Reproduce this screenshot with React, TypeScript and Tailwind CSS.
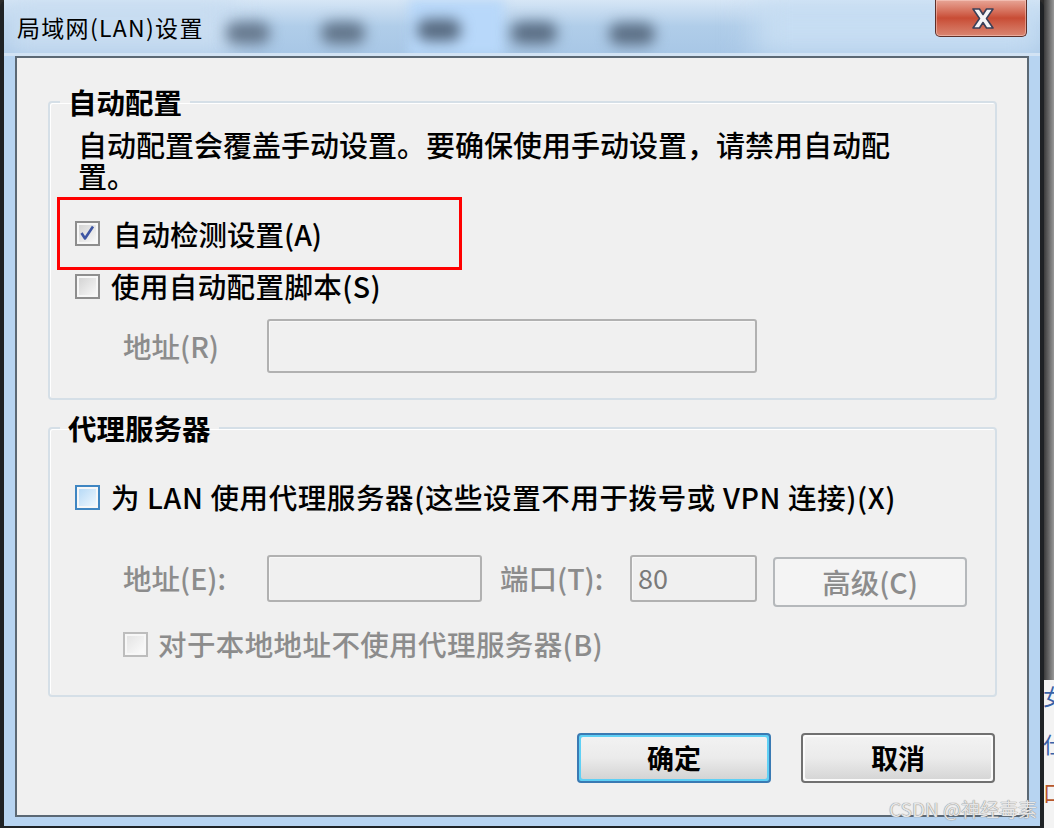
import React from 'react';

const FONT = "font-['Noto_Sans_CJK_SC','Noto_Sans',sans-serif]";

type Kind = 'checked' | 'plain' | 'hot' | 'disabled';

function Check({ kind }: { kind: Kind }) {
  const border =
    kind === 'hot' ? 'border-[#3f86c2]' : kind === 'disabled' ? 'border-[#bdbdbd]' : 'border-[#8e8e8e]';
  const fill =
    kind === 'hot'
      ? 'from-[#b7daf6] to-[#eef7fe]'
      : kind === 'disabled'
      ? 'from-[#e4e4e4] to-[#fbfbfb]'
      : 'from-[#d4d4d4] to-[#f8f8f8]';
  return (
    <div className={`relative w-[25px] h-[25px] shrink-0 border-[2.5px] ${border} bg-[#f7f7f7] p-[2px]`}>
      <div className={`w-full h-full bg-linear-to-br ${fill}`} />
      {kind === 'checked' && (
        <svg className="absolute inset-0" width="20" height="20" viewBox="0 0 20 20">
          <path d="M4.5 10 L8 15.5 L16 3.5" fill="none" stroke="#3d55a3" strokeWidth="2.6" strokeLinejoin="round" />
        </svg>
      )}
    </div>
  );
}

function TextBox({ w, h, children }: { w: string; h: string; children?: React.ReactNode }) {
  return (
    <div
      className={`${w} ${h} shrink-0 rounded-[3px] border-2 border-[#b1b1b1] bg-[#f0f0f0] shadow-[inset_1px_1px_0_#f7f7f7] px-[6px] pt-[3px] text-[27px] leading-[36px] text-[#7a7a7a]`}
    >
      {children}
    </div>
  );
}

function Legend({ children }: { children: React.ReactNode }) {
  return <legend className="ml-[10px] px-[8px] text-[28.5px] leading-[30px] font-bold text-black">{children}</legend>;
}

export default function App() {
  return (
    <div className={`w-[1054px] h-[828px] flex bg-[#2b2b2b] overflow-hidden relative ${FONT}`}>
      {/* window */}
      <div className="w-[1044px] h-[828px] flex flex-col bg-[#b7d4f1] border-l-4 border-r-4 border-b-2 border-[#1f2225] rounded-tl-[8px] rounded-tr-[8px]">
        {/* title bar */}
        <div className="relative h-[56px] shrink-0 overflow-hidden bg-linear-to-b from-[#d6e6f6] via-[#b0cde9] to-[#a8c7e6] border-b-[3px] border-[#d2e3f4]">
          <div className="absolute left-[0px] top-0 w-[230px] h-[56px] bg-[#c9ddf1] blur-[14px]" />
          <div className="absolute left-[405px] top-0 w-[95px] h-[56px] bg-[#b8d8fa] blur-[6px]" />
          <div className="absolute left-[222px] top-[22px] w-[44px] h-[22px] rounded-[10px] bg-[#66788d] blur-[7px]" />
          <div className="absolute left-[317px] top-[22px] w-[44px] h-[22px] rounded-[10px] bg-[#617489] blur-[7px]" />
          <div className="absolute left-[413px] top-[19px] w-[44px] h-[22px] rounded-[10px] bg-[#56697f] blur-[7px]" />
          <div className="absolute left-[507px] top-[22px] w-[46px] h-[22px] rounded-[10px] bg-[#5a6d83] blur-[7px]" />
          <div className="absolute left-[605px] top-[23px] w-[46px] h-[22px] rounded-[10px] bg-[#5b6e84] blur-[7px]" />
          <div className="absolute left-[750px] top-0 w-[290px] h-[56px] bg-[#c8def3] blur-[16px]" />
          <div className="relative pl-[13px] pt-[13px] text-[23px] leading-[28px] text-black tracking-[1.3px]">
            局域网(LAN)设置
          </div>
          {/* close button */}
          <div className="absolute top-0 right-[13px] w-[92px] h-[37px] rounded-b-[5px] border border-t-0 border-[#5d2f29] bg-linear-to-b from-[#e7a597] via-[#c84c35] to-[#d98571] flex items-center justify-center shadow-[inset_0_0_0_1px_rgba(255,220,210,0.45)]">
            <svg width="24" height="21" viewBox="0 0 24 21" className="ml-[3px]">
              <polygon
                points="2,1 8.5,1 12,6.5 15.5,1 22,1 15.5,10.5 22,20 15.5,20 12,14.5 8.5,20 2,20 8.5,10.5"
                fill="#f4f4f6"
                stroke="#3b4058"
                strokeWidth="1.6"
                strokeLinejoin="round"
              />
            </svg>
          </div>
        </div>

        {/* frame around client */}
        <div className="flex-1 flex flex-col px-[11px] pb-[9px]">
          <div className="flex-1 border-2 border-[#5b6874] bg-[#f0f0f0] flex flex-col pl-[31px] pr-[30px] text-black">
            {/* group 1 */}
            <fieldset className="mt-[29px] h-[313px] border-2 border-[#d5dfe7] rounded-[4px] shadow-[inset_1px_1px_0_#ffffff]">
              <Legend>自动配置</Legend>
              <div className="ml-[28px] mt-[12px] text-[29px] leading-[31px] font-medium">
                <div>自动配置会覆盖手动设置。要确保使用手动设置，请禁用自动配</div>
                <div>置。</div>
              </div>
              <div className="ml-[7px] mt-[6px] w-[405px] h-[73px] border-[3px] border-[#ff0000] flex items-center pl-[15px] gap-[13px]">
                <Check kind="checked" />
                <span className="text-[28.5px] leading-[30px] font-medium">自动检测设置(A)</span>
              </div>
              <div className="ml-[25px] mt-[1px] h-[30px] flex items-center gap-[11px]">
                <Check kind="plain" />
                <span className="text-[28.5px] leading-[30px] font-medium tracking-[0.4px]">使用自动配置脚本(S)</span>
              </div>
              <div className="ml-[73px] mt-[18px] flex items-center">
                <span className="w-[144px] text-[28.5px] leading-[30px] font-medium text-[#8c8c8c]">地址(R)</span>
                <TextBox w="w-[490px]" h="h-[54px]" />
              </div>
            </fieldset>

            {/* group 2 */}
            <fieldset className="mt-[13px] h-[284px] border-2 border-[#d5dfe7] rounded-[4px] shadow-[inset_1px_1px_0_#ffffff]">
              <Legend>代理服务器</Legend>
              <div className="ml-[25px] mt-[39px] h-[30px] flex items-center gap-[11px]">
                <Check kind="hot" />
                <span className="text-[28.5px] leading-[30px] font-medium whitespace-nowrap tracking-[0.6px]">
                  为 LAN 使用代理服务器(这些设置不用于拨号或 VPN 连接)(X)
                </span>
              </div>
              <div className="ml-[73px] mt-[43px] flex items-start">
                <span className="w-[144px] h-[47px] flex items-center text-[28.5px] font-medium text-[#8c8c8c]">地址(E):</span>
                <TextBox w="w-[215px]" h="h-[47px]" />
                <span className="ml-[18px] w-[130px] h-[47px] flex items-center text-[28.5px] font-medium text-[#8c8c8c]">端口(T):</span>
                <TextBox w="w-[127px]" h="h-[47px]">80</TextBox>
                <div className="ml-[16px] mt-[2px] w-[194px] h-[50px] rounded-[4px] border-2 border-[#b5b8bb] bg-[#f4f4f4] flex items-center justify-center text-[28.5px] font-medium text-[#8c8c8c]">
                  高级(C)
                </div>
              </div>
              <div className="ml-[73px] mt-[22px] h-[30px] flex items-center gap-[10px]">
                <Check kind="disabled" />
                <span className="text-[28.5px] leading-[30px] font-medium text-[#8c8c8c] tracking-[0.4px]">对于本地地址不使用代理服务器(B)</span>
              </div>
            </fieldset>

            {/* buttons */}
            <div className="mt-[36px] flex justify-end gap-[30px] pr-[2px]">
              <div className="w-[194px] h-[50px] rounded-[4px] border-2 border-[#3a7ab3] p-[2px] bg-[#5fd0f5]">
                <div className="w-full h-full rounded-[2px] bg-linear-to-b from-[#f2f2f2] via-[#ebebeb] via-50% to-[#d4d4d4] flex items-center justify-center text-[27px] font-bold text-black">
                  确定
                </div>
              </div>
              <div className="w-[194px] h-[50px] rounded-[4px] border-2 border-[#707070] p-[2px] bg-[#fbfbfb]">
                <div className="w-full h-full rounded-[2px] bg-linear-to-b from-[#f2f2f2] via-[#ebebeb] via-50% to-[#d6d6d6] flex items-center justify-center text-[27px] font-bold text-black">
                  取消
                </div>
              </div>
            </div>
          </div>
        </div>
      </div>

      {/* background strip at right */}
      <div className="w-[10px] h-[828px] flex flex-col overflow-hidden">
        <div className="flex-1 bg-linear-to-r from-[#3c3c3c] to-[#9a9a9a]" />
        <div className="h-[148px] bg-[#f3f3f3] flex flex-col text-[22px] leading-[22px] text-[#3a62a8] pt-[4px] gap-[26px]">
          <span className="-ml-[1px]">女</span>
          <span className="-ml-[1px]">仕</span>
          <span className="-ml-[1px] text-[#b8572b]">口</span>
        </div>
      </div>

      {/* watermark */}
      <div className="absolute left-[889px] top-[798px] text-[19px] leading-[22px] text-[#e6e6e6] [text-shadow:0_0_1px_#8a8a8a,0_0_1px_#8a8a8a] whitespace-nowrap">
        CSDN @神经毒素
      </div>
    </div>
  );
}
